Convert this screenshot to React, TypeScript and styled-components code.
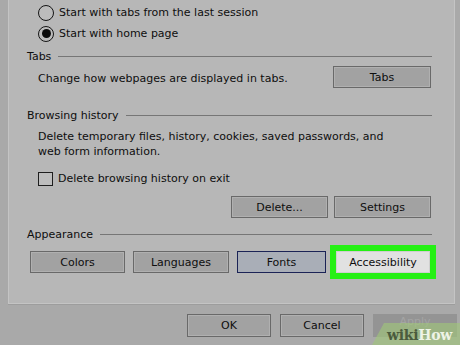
import React from "react";
import styled, { createGlobalStyle } from "styled-components";

const Global = createGlobalStyle`
  html, body { margin: 0; padding: 0; background: #a9a9a9; }
  #root { width: 460px; height: 345px; }
`;

const Screen = styled.div`
  position: relative;
  width: 460px;
  height: 345px;
  overflow: hidden;
  background: #a9a9a9;
  font-family: "DejaVu Sans", Verdana, sans-serif;
  font-size: 11px;
  color: #0e0e0e;
`;

const Panel = styled.div`
  box-sizing: border-box;
  margin-left: 8px;
  width: 447px;
  height: 304px;
  background: #b7b7b7;
  border: 1px solid #c4c4c4;
  border-top: none;
  box-shadow: 0 1px 0 #9d9d9d;
  padding: 2px 22px 0 18px;
  display: flex;
  flex-direction: column;
`;

const Indent = styled.div<{ $top?: number }>`
  margin-left: 11px;
  margin-top: ${(p) => p.$top ?? 0}px;
`;

const OptionRow = styled.label`
  display: flex;
  align-items: center;
  gap: 5px;
  height: 21px;
`;

const Radio = styled.span<{ $checked?: boolean }>`
  box-sizing: border-box;
  width: 16px;
  height: 16px;
  border-radius: 50%;
  border: 1.5px solid #151515;
  background: #bcbcbc;
  display: flex;
  align-items: center;
  justify-content: center;
  &::after {
    content: "";
    display: ${(p) => (p.$checked ? "block" : "none")};
    width: 9px;
    height: 9px;
    border-radius: 50%;
    background: #0c0c0c;
  }
`;

const Check = styled.span`
  box-sizing: border-box;
  width: 15px;
  height: 14px;
  border: 1px solid #1e1e1e;
  background: #bdbdbd;
`;

const Header = styled.div<{ $top: number }>`
  display: flex;
  align-items: center;
  gap: 7px;
  height: 14px;
  margin-top: ${(p) => p.$top}px;
  &::after {
    content: "";
    flex: 1;
    height: 1px;
    background: #767676;
  }
`;

const SplitRow = styled.div<{ $top: number }>`
  display: flex;
  align-items: center;
  justify-content: space-between;
  margin-top: ${(p) => p.$top}px;
  margin-left: 11px;
  margin-right: 1px;
`;

const Text = styled.span`
  padding-top: 3px;
`;

const Para = styled.p`
  margin: 0;
  line-height: 15px;
`;

const ButtonRow = styled.div<{ $top: number; $left?: number; $gap: number }>`
  display: flex;
  gap: ${(p) => p.$gap}px;
  margin-top: ${(p) => p.$top}px;
  margin-left: ${(p) => p.$left ?? 0}px;
`;

type Variant = "normal" | "focus" | "highlight" | "disabled";

const fills: Record<Variant, string> = {
  normal: "#a2a2a2",
  focus: "#a9aeb7",
  highlight: "#e1e1e1",
  disabled: "#949494",
};

const borders: Record<Variant, string> = {
  normal: "#696969",
  focus: "#1b2356",
  highlight: "#cfcfcf",
  disabled: "#949494",
};

const Button = styled.button<{ $w: number; $h?: number; $variant?: Variant }>`
  box-sizing: border-box;
  width: ${(p) => p.$w}px;
  height: ${(p) => p.$h ?? 22}px;
  margin: 0;
  padding: ${(p) => (p.$variant === "disabled" ? "0 0 12px" : "0")};
  font-family: "DejaVu Sans", Verdana, sans-serif;
  font-size: 11px;
  color: ${(p) => (p.$variant === "disabled" ? "#a4a4a4" : "#0e0e0e")};
  background: ${(p) => fills[p.$variant ?? "normal"]};
  border: 1px solid ${(p) => borders[p.$variant ?? "normal"]};
  box-shadow: ${(p) =>
    (p.$variant ?? "normal") === "normal" ? "inset 0 0 0 1px #b0b0b0" : "none"};
  outline: ${(p) => (p.$variant === "highlight" ? "6px solid #25f014" : "none")};
`;

const Footer = styled.div`
  display: flex;
  justify-content: flex-end;
  gap: 9px;
  margin-top: 10px;
  padding-right: 3px;
`;

const Badge = styled.div`
  position: absolute;
  right: 0;
  bottom: 0;
  width: 88px;
  height: 22px;
  background: rgba(160, 200, 120, 0.6);
  clip-path: polygon(12px 0, 100% 0, 100% 100%, 0 100%);
  display: flex;
  align-items: center;
  padding: 2px 0 0 15px;
  box-sizing: border-box;
  font-family: "DejaVu Serif", "Liberation Serif", serif;
  font-weight: bold;
  font-size: 14px;
  line-height: 16px;
  letter-spacing: -0.3px;
`;

const Wiki = styled.span`
  color: #4b5b3d;
`;

const How = styled.span`
  color: #eef3e6;
`;

export default function App() {
  return (
    <Screen>
      <Global />
      <Panel>
        <Indent>
          <OptionRow>
            <Radio />
            <span>Start with tabs from the last session</span>
          </OptionRow>
          <OptionRow>
            <Radio $checked />
            <span>Start with home page</span>
          </OptionRow>
        </Indent>

        <Header $top={5}>Tabs</Header>
        <SplitRow $top={3}>
          <Text>Change how webpages are displayed in tabs.</Text>
          <Button $w={98}>Tabs</Button>
        </SplitRow>

        <Header $top={20}>Browsing history</Header>
        <Indent $top={7}>
          <Para>
            Delete temporary files, history, cookies, saved passwords, and
            <br />
            web form information.
          </Para>
        </Indent>
        <Indent $top={9}>
          <OptionRow>
            <Check />
            <span>Delete browsing history on exit</span>
          </OptionRow>
        </Indent>
        <ButtonRow $top={7} $left={204} $gap={6}>
          <Button $w={97}>Delete...</Button>
          <Button $w={97}>Settings</Button>
        </ButtonRow>

        <Header $top={9}>Appearance</Header>
        <ButtonRow $top={10} $left={3} $gap={8}>
          <Button $w={95}>Colors</Button>
          <Button $w={96}>Languages</Button>
          <Button $w={89} $variant="focus">Fonts</Button>
          <Button $w={94} $variant="highlight" style={{ marginLeft: 2 }}>
            Accessibility
          </Button>
        </ButtonRow>
      </Panel>

      <Footer>
        <Button $w={84} $h={23}>OK</Button>
        <Button $w={84} $h={23}>Cancel</Button>
        <Button $w={84} $h={23} $variant="disabled">Apply</Button>
      </Footer>

      <Badge>
        <Wiki>wiki</Wiki>
        <How>How</How>
      </Badge>
    </Screen>
  );
}
